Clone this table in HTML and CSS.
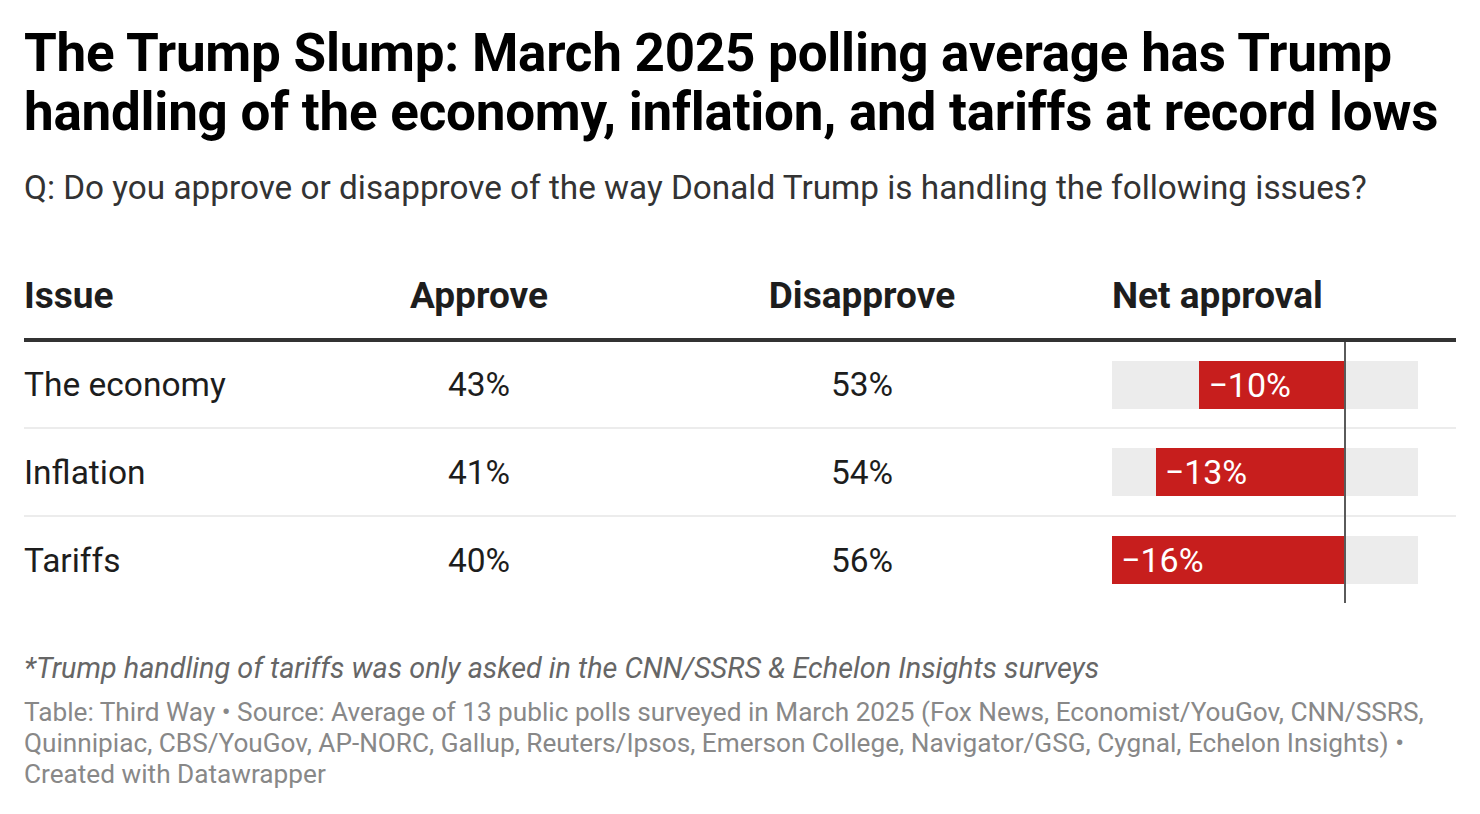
FILE: index.html
```html
<!DOCTYPE html>
<html lang="en">
<head>
<meta charset="utf-8">
<title>The Trump Slump</title>
<link rel="stylesheet" href="styles.css">
</head>
<body>
<div class="chart">
  <h1 class="title">The Trump Slump: March 2025 polling average has Trump handling of the economy, inflation, and tariffs at record lows</h1>
  <p class="subtitle">Q: Do you approve or disapprove of the way Donald Trump is handling the following issues?</p>

  <table class="tbl">
    <colgroup>
      <col class="c-issue">
      <col class="c-approve">
      <col class="c-dis">
      <col class="c-net">
    </colgroup>
    <thead>
      <tr>
        <th class="left">Issue</th>
        <th>Approve</th>
        <th>Disapprove</th>
        <th class="left">Net approval</th>
      </tr>
    </thead>
    <tbody>
      <tr>
        <td class="left">The economy</td>
        <td>43%</td>
        <td>53%</td>
        <td class="net"><div class="track"><div class="neg"><div class="bar" style="width:145.6px"><span>−10%</span></div></div><div class="pos"></div></div></td>
      </tr>
      <tr>
        <td class="left">Inflation</td>
        <td>41%</td>
        <td>54%</td>
        <td class="net"><div class="track"><div class="neg"><div class="bar" style="width:189.3px"><span>−13%</span></div></div><div class="pos"></div></div></td>
      </tr>
      <tr class="last">
        <td class="left">Tariffs</td>
        <td>40%</td>
        <td>56%</td>
        <td class="net"><div class="track"><div class="neg"><div class="bar" style="width:233px"><span>−16%</span></div></div><div class="pos"></div></div></td>
      </tr>
    </tbody>
  </table>

  <p class="note">*Trump handling of tariffs was only asked in the CNN/SSRS &amp; Echelon Insights surveys</p>
  <p class="source">Table: Third Way • Source: Average of 13 public polls surveyed in March 2025 (Fox News, Economist/YouGov, CNN/SSRS, Quinnipiac, CBS/YouGov, AP-NORC, Gallup, Reuters/Ipsos, Emerson College, Navigator/GSG, Cygnal, Echelon Insights) • Created with Datawrapper</p>
</div>
</body>
</html>
```

FILE: styles.css
```css
* { box-sizing: border-box; }

html, body {
  margin: 0;
  padding: 0;
  background: #ffffff;
}

body {
  font-family: Roboto, "Liberation Sans", Arial, sans-serif;
  color: #1d1d1d;
}

.chart {
  width: 1480px;
  padding: 24px 24px 0 24px;
}

.title {
  margin: 0;
  font-size: 53px;
  line-height: 59px;
  letter-spacing: -0.25px;
  font-weight: 700;
  color: #000;
}

.subtitle {
  margin: 25px 0 0 0;
  font-size: 33.3px;
  line-height: 42px;
  color: #333;
}

.tbl {
  margin-top: 67px;
  width: 1432px;
  border-collapse: collapse;
  table-layout: fixed;
}

.c-issue { width: 322px; }
.c-approve { width: 266px; }
.c-dis { width: 500px; }
.c-net { width: 344px; }

.tbl th {
  font-size: 37px;
  line-height: 40px;
  font-weight: 700;
  color: #1d1d1d;
  text-align: center;
  padding: 0 0 22px 0;
  border-bottom: 4px solid #333;
}

.tbl td {
  font-size: 33.5px;
  height: 88px;
  padding: 0;
  text-align: center;
  vertical-align: middle;
  border-bottom: 2px solid #ececec;
}

.tbl tr.last td { border-bottom: none; height: 87px; }

.tbl .left { text-align: left; }

.tbl td.net {
  position: relative;
  text-align: left;
}

.tbl td.net::after {
  content: "";
  position: absolute;
  left: 232px;
  top: 0;
  bottom: -2px;
  width: 2px;
  background: #5a5a5a;
}

.tbl tr.last td.net::after { bottom: 0; }

.track {
  display: flex;
  width: 306px;
  height: 48px;
  background: #ececec;
}

.neg {
  width: 233px;
  display: flex;
  justify-content: flex-end;
}

.bar {
  height: 48px;
  background: #c71e1d;
  color: #fff;
  display: flex;
  align-items: center;
  padding-left: 9px;
  font-size: 34px;
  white-space: nowrap;
}

.pos { flex: 1; }

.note {
  margin: 48px 0 0 0;
  font-size: 28.8px;
  line-height: 34px;
  font-style: italic;
  color: #666;
}

.source {
  margin: 12px 0 0 0;
  font-size: 26.2px;
  line-height: 31px;
  color: #888;
}
```
